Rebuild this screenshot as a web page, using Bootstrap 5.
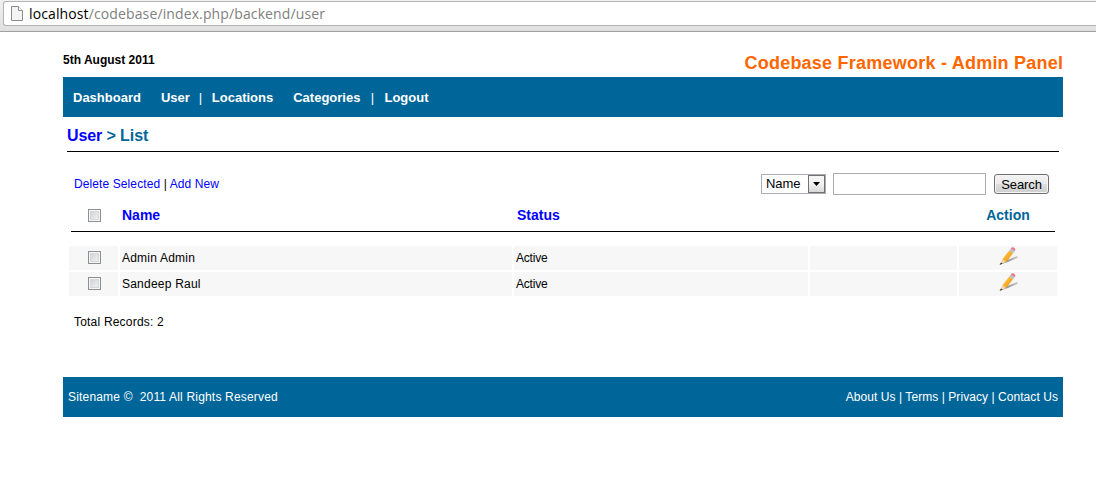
<!DOCTYPE html>
<html lang="en">
<head>
<meta charset="utf-8">
<title>Codebase Framework - Admin Panel</title>
<link rel="stylesheet" href="https://cdn.jsdelivr.net/npm/bootstrap@5.3.0/dist/css/bootstrap.min.css">
<style>
body{font:12px/16px "Liberation Sans",Arial,sans-serif;color:#000;background:#fff;overflow:hidden}
a{text-decoration:none;color:#00f}
.browser-bar{height:32px;padding:1px 0 0 3px;background:linear-gradient(#f0f0f0,#e0e0e0);border-bottom:1px solid #a0a0a0}
.address{height:25px;border:1px solid #b4b4b4;border-right:0;border-radius:3px 0 0 3px;padding-left:7px;font:14px/22px "Open Sans","Noto Sans",sans-serif;letter-spacing:.12px;color:#808080;background:#fff}
.address b{font-weight:400;color:#000}
.address svg{margin-right:6px}
.page{width:1000px;margin-left:63px}
.top-line{height:45px}
.date{padding-top:20px;font-size:12px}
.brand-title{font-size:18px;line-height:20px;letter-spacing:.23px;margin-right:-.25px;color:#f60;padding-top:21px}
.bar{height:40px;background:#069;color:#fff}
.bar a{color:#fff}
.menu{font-size:13px;font-weight:700;padding:2px 0 0 10px}
.menu .apart{margin-left:20px}
.menu .sep{width:23px;text-align:center;font-weight:400}
.menu .sep-last{width:24px}
.menu .sep-first{margin-left:-1px}
.crumb{height:35px;margin:0 4px;border-bottom:1px solid #000;font-size:16px;line-height:20px;letter-spacing:-.1px;font-weight:700;color:#069;padding-top:9px}
.tools{height:22px;margin:21px 14px 0 11px}
.links{letter-spacing:.1px}
.field{border:1px solid #abadb3;background:#fff}
.pick{width:65px;height:20px;font-size:13px;letter-spacing:-.1px;padding:0 0 0 4px;margin-right:7px}
.pick i{width:17px;height:18px;border:1px solid #707070;background:linear-gradient(#f4f4f4 45%,#d8d8d8)}
.query{width:153px;height:22px;border-radius:0;margin-right:8px;padding:0 3px}
.go{width:55px;height:20px;border:1px solid #707070;border-radius:3px;background:linear-gradient(#f2f2f2 0,#ebebeb 50%,#ddd 51%,#cfcfcf);padding:0;font-size:13px;letter-spacing:-.1px;line-height:17px;color:#000;box-shadow:inset 0 0 0 1px #f5f5f5}
.grid-row{display:grid;grid-template-columns:49px 392px 294px 147px 98px;column-gap:2px;margin:0 6px}
.heads{height:37px;font-size:14px;font-weight:700;color:#069;margin:0 8px 14px;border-bottom:1px solid #000}
.heads .grid-row{margin:0 -2px;height:36px}
.heads .grid-row>div{padding:12px 2px 0}
.heads .grid-row .status-head{padding-left:3px}
.line{height:24px;margin-bottom:2px;letter-spacing:.22px}
.line>div{background:#f7f7f7;padding:4px 2px}
.line .state{letter-spacing:-.2px}
.line>div:first-child,.heads .grid-row>div:first-child{padding-left:19px}
.tick{appearance:none;display:block;width:13px;height:13px;margin:1px 0 0;border:1px solid #8e8f8f;background:linear-gradient(135deg,#c8ccd2,#f8f8f8);box-shadow:inset 0 0 0 1px #f6f6f6,inset 0 0 0 2px #d6d8da}
.heads .grid-row .tick{margin-top:2px}
.line .pencil{padding:0 0 0 40px}
.pencil svg{display:block}
.total{margin:18px 11px 47px;letter-spacing:.2px}
.foot{padding:0 5px}
.rights{letter-spacing:.18px}
.foot-links{letter-spacing:.06px}
</style>
</head>
<body>
<svg width="0" height="0" class="position-absolute">
<defs>
<linearGradient id="wood" x1="0" y1="0" x2="1" y2="1"><stop offset="0" stop-color="#ffd264"/><stop offset=".5" stop-color="#fbb02c"/><stop offset="1" stop-color="#e08c10"/></linearGradient>
<linearGradient id="shade"><stop offset="0" stop-color="#333"/><stop offset="1" stop-color="#999" stop-opacity=".7"/></linearGradient>
<symbol id="pencil" viewBox="0 0 20 20">
<path d="M1 18.5 8 14l9.5-3.8 1.5.2-.6 1.7-9.4 4z" fill="url(#shade)" opacity=".7"/>
<path d="M3.2 13.4 10.2 4.4l4 2.7-7 8.8z" fill="url(#wood)"/>
<path d="m3.2 13.4 4 2.5-6.3 2.9z" fill="#f1d5a6"/>
<path d="m1.9 16.4 1.7 1.2-3 1.3z" fill="#333"/>
<path d="m10.2 4.4 1.6-2 4 2.7-1.6 2z" fill="#b9bec8"/>
<path d="M11.8 2.4c.9-1.2 1.9-1.5 3.2-.7 1.4.9 1.7 2.1.8 3.4z" fill="#f0717c"/>
</symbol>
</defs>
</svg>
<header class="browser-bar">
<div class="address d-flex align-items-center">
<svg width="12" height="16" viewBox="0 0 12 16"><path d="M.5.5h7l4 4v10H.5z" fill="#f4f4f4" stroke="#8c8c8c"/><path d="M7.5.5v4h4" fill="#fff" stroke="#8c8c8c"/></svg>
<div class="url"><b>localhost</b>/codebase/index.php/backend/user</div>
</div>
</header>
<main class="page">
<div class="top-line d-flex justify-content-between"><div class="date fw-bold">5th August 2011</div><div class="brand-title fw-bold">Codebase Framework - Admin Panel</div></div>
<nav class="bar menu d-flex align-items-center"><a href="#">Dashboard</a><a href="#" class="apart">User</a><span class="sep sep-first">|</span><a href="#">Locations</a><a href="#" class="apart">Categories</a><span class="sep sep-last">|</span><a href="#">Logout</a></nav>
<div class="crumb"><a href="#">User</a> &gt; List</div>
<div class="tools d-flex align-items-center justify-content-between">
<div class="links"><a href="#">Delete Selected</a> | <a href="#">Add New</a></div>
<div class="d-flex align-items-center">
<div class="field pick d-flex align-items-center justify-content-between">Name<i class="d-flex align-items-center justify-content-center"><svg width="7" height="4"><path d="M0 0h7L3.5 4z"/></svg></i></div>
<input class="field query" type="text" aria-label="Search text">
<button class="go" type="button">Search</button>
</div>
</div>
<div class="heads"><div class="grid-row">
<div><input class="tick" type="checkbox" aria-label="All"></div><div><a href="#">Name</a></div><div class="status-head"><a href="#">Status</a></div><div></div><div class="text-center">Action</div>
</div></div>
<div class="grid-row line"><div><input class="tick" type="checkbox" aria-label="Admin Admin"></div><div>Admin Admin</div><div class="state">Active</div><div></div><div class="pencil"><svg width="20" height="20"><use href="#pencil"/></svg></div></div>
<div class="grid-row line"><div><input class="tick" type="checkbox" aria-label="Sandeep Raul"></div><div>Sandeep Raul</div><div class="state">Active</div><div></div><div class="pencil"><svg width="20" height="20"><use href="#pencil"/></svg></div></div>
<div class="total">Total Records: 2</div>
<footer class="bar foot d-flex align-items-center justify-content-between">
<div class="rights">Sitename ©&nbsp; 2011 All Rights Reserved</div>
<div class="foot-links"><a href="#">About Us</a> | <a href="#">Terms</a> | <a href="#">Privacy</a> | <a href="#">Contact Us</a></div>
</footer>
</main>
<script src="https://cdn.jsdelivr.net/npm/bootstrap@5.3.0/dist/js/bootstrap.bundle.min.js"></script>
</body>
</html>
